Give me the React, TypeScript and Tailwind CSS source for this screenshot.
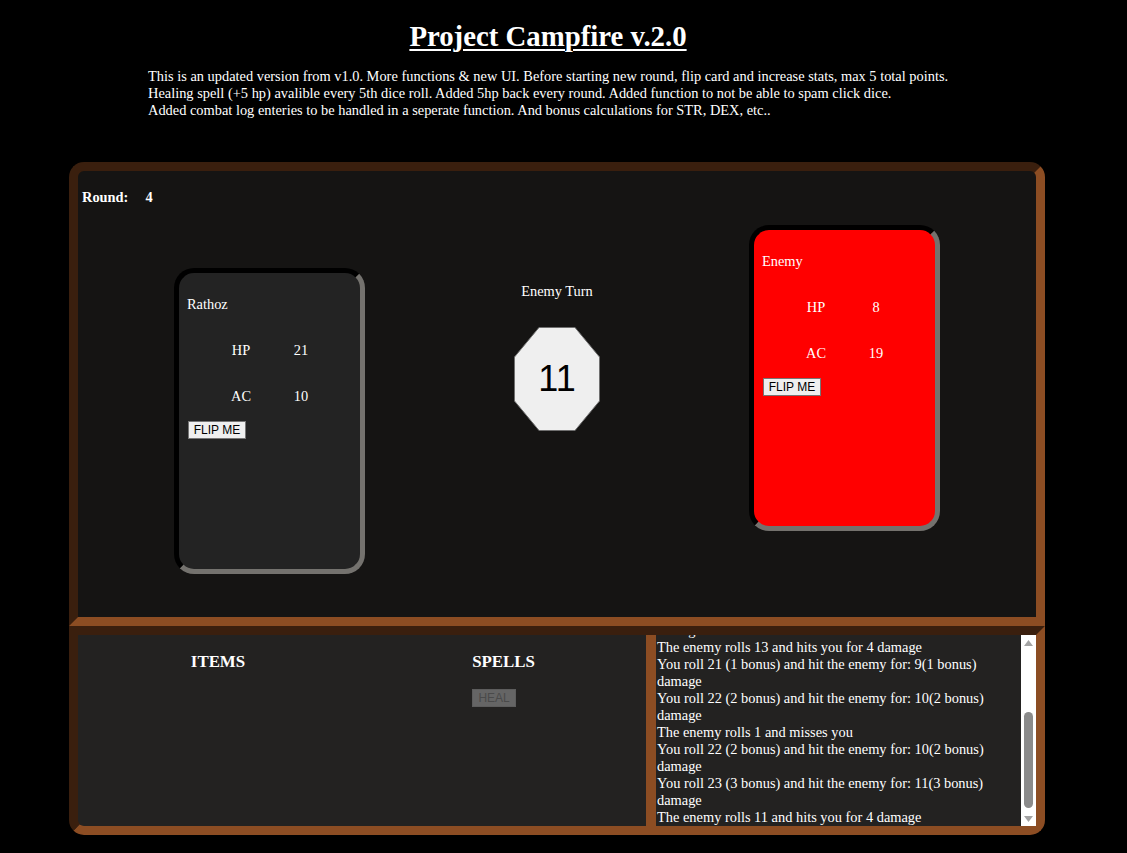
const logLines = [
  'You roll 18 (0 bonus) and hit the enemy for: 7(0 bonus) damage',
  'The enemy rolls 9 and misses you',
  'You roll 20 (1 bonus) and hit the enemy for: 8(1 bonus) damage',
  'The enemy rolls 15 and hits you for 4 damage',
  'You roll 19 (1 bonus) and hit the enemy for: 9(1 bonus) damage',
  'The enemy rolls 13 and hits you for 4 damage',
  'You roll 21 (1 bonus) and hit the enemy for: 9(1 bonus) damage',
  'You roll 22 (2 bonus) and hit the enemy for: 10(2 bonus) damage',
  'The enemy rolls 1 and misses you',
  'You roll 22 (2 bonus) and hit the enemy for: 10(2 bonus) damage',
  'You roll 23 (3 bonus) and hit the enemy for: 11(3 bonus) damage',
  'The enemy rolls 11 and hits you for 4 damage',
]

function FlipButton() {
  return (
    <button className="ml-[9px] mt-[16px] block h-[18px] w-[58px] border border-[#767676] bg-[#efefef] p-0 font-['Liberation_Sans',sans-serif] text-[12px] leading-[16px] text-black">
      FLIP ME
    </button>
  )
}

function Card({ name, hp, ac, red }: { name: string; hp: number; ac: number; red?: boolean }) {
  return (
    <div
      className={
        'h-[306px] w-[191px] rounded-[20px] border-[5px] border-t-black border-l-black border-r-[#74726e] border-b-[#74726e] ' +
        (red ? 'bg-[#ff0000]' : 'bg-[#232323]')
      }
    >
      <div className="pl-[8px] pt-[23px]">{name}</div>
      <div className="mt-[29px] flex pl-[32px]">
        <span className="w-[60px] text-center">HP</span>
        <span className="w-[60px] text-center">{hp}</span>
      </div>
      <div className="mt-[29px] flex pl-[32px]">
        <span className="w-[60px] text-center">AC</span>
        <span className="w-[60px] text-center">{ac}</span>
      </div>
      <FlipButton />
    </div>
  )
}

function Dice({ value }: { value: number }) {
  return (
    <div className="relative flex h-[104px] w-[86px] items-center justify-center">
      <svg className="absolute inset-0" width="86" height="104" viewBox="0 0 86 104">
        <polygon
          points="25,0.5 61,0.5 85.5,30 85.5,74 61,103.5 25,103.5 0.5,74 0.5,30"
          fill="#efefef"
          stroke="#6f6f6f"
          strokeWidth="1"
        />
      </svg>
      <span className="relative font-['Liberation_Sans',sans-serif] text-[36px] leading-none text-black">{value}</span>
    </div>
  )
}

// classic scrollbar, scrolled to the bottom
function ScrollBar() {
  return (
    <div className="flex w-[15px] flex-col bg-white">
      <div className="flex h-[15px] items-center justify-center">
        <svg width="9" height="6" viewBox="0 0 9 6">
          <polygon points="4.5,0 9,6 0,6" fill="#a3a3a3" />
        </svg>
      </div>
      <div className="flex flex-1 flex-col justify-end">
        <div className="mx-[3px] mb-[3px] h-[96px] rounded-full bg-[#8b8b8b]" />
      </div>
      <div className="flex h-[15px] items-center justify-center">
        <svg width="9" height="6" viewBox="0 0 9 6">
          <polygon points="0,0 9,0 4.5,6" fill="#a3a3a3" />
        </svg>
      </div>
    </div>
  )
}

export default function App() {
  return (
    <div className="min-h-screen bg-black pb-[18px] font-['Liberation_Serif',serif] text-[14.4px] leading-[17px] text-white">
      {/* Header */}
      <div className="ml-[148px] w-[800px] pt-[20px]">
        <h1 className="text-center text-[28.8px] font-bold leading-[33px] underline decoration-[2px] underline-offset-[3px]">
          Project Campfire v.2.0
        </h1>
        <div className="mt-[15px] whitespace-nowrap">
          <p>This is an updated version from v1.0. More functions &amp; new UI. Before starting new round, flip card and increase stats, max 5 total points.</p>
          <p>Healing spell (+5 hp) avalible every 5th dice roll. Added 5hp back every round. Added function to not be able to spam click dice.</p>
          <p>Added combat log enteries to be handled in a seperate function. And bonus calculations for STR, DEX, etc..</p>
        </div>
      </div>

      {/* Board */}
      <div className="ml-[69px] mt-[43px] w-[976px]">
        <div className="h-[464px] rounded-t-[15px] border-[9px] border-t-[#3a1f0e] border-l-[#3a1f0e] border-r-[#8c4d23] border-b-[#8c4d23] bg-[#151413]">
          <div className="pl-[4px] pt-[18px] font-bold">
            Round:<span className="ml-[17px]">4</span>
          </div>
          <div className="mt-[19px] flex items-start justify-between px-[96px]">
            <div className="mt-[43px]">
              <Card name="Rathoz" hp={21} ac={10} />
            </div>
            <div className="mt-[58px] flex w-[86px] flex-col items-center">
              <div className="whitespace-nowrap">Enemy Turn</div>
              <div className="mt-[27px]">
                <Dice value={11} />
              </div>
            </div>
            <Card name="Enemy" hp={8} ac={19} red />
          </div>
        </div>

        <div className="flex h-[209px] rounded-b-[15px] border-[9px] border-t-[#3a1f0e] border-l-[#3a1f0e] border-r-[#8c4d23] border-b-[#8c4d23] bg-[#232221]">
          <div className="flex w-[568px] shrink-0">
            <div className="w-[280px] pt-[17px] text-center">
              <h3 className="text-[16.85px] font-bold leading-[19px]">ITEMS</h3>
            </div>
            <div className="flex w-[288px] flex-col items-center pl-[3px] pt-[17px]">
              <div>
                <h3 className="text-[16.85px] font-bold leading-[19px]">SPELLS</h3>
                <button
                  disabled
                  className="mt-[18px] block h-[18px] w-[44px] border border-[#5d5d5d] bg-[#656565] p-0 font-['Liberation_Sans',sans-serif] text-[12px] leading-[16px] text-[#4a4a4a]"
                >
                  HEAL
                </button>
              </div>
            </div>
          </div>
          <div className="w-[10px] bg-[#8c4d23]" />
          <div className="flex min-w-0 flex-1 flex-col justify-end overflow-hidden pl-[1px]">
            {logLines.map((line, i) => (
              <div key={i} className="shrink-0">
                {line}
              </div>
            ))}
          </div>
          <ScrollBar />
        </div>
      </div>
    </div>
  )
}
